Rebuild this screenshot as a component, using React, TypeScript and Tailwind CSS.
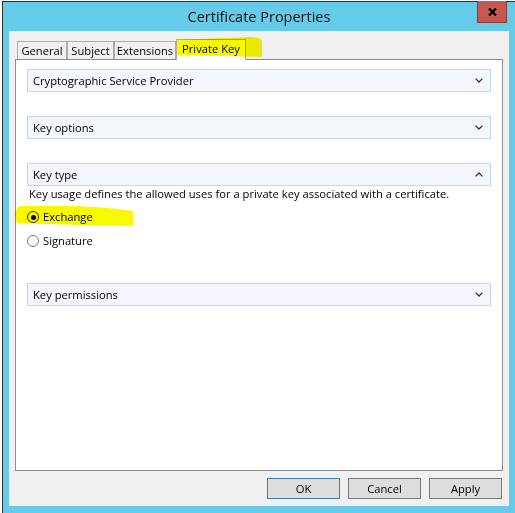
import { ReactNode } from "react";

function Chevron({ up = false }: { up?: boolean }) {
  return (
    <svg width="8" height="5" viewBox="0 0 8 5" className="shrink-0">
      <path
        d={up ? "M0.6 4.4 L4 1 L7.4 4.4" : "M0.6 0.6 L4 4 L7.4 0.6"}
        fill="none"
        stroke="#333"
        strokeWidth="1.3"
      />
    </svg>
  );
}

function Section({ title, open = false }: { title: string; open?: boolean }) {
  return (
    <div className="flex h-[23px] items-center justify-between border border-[#c3d8f3] bg-[#f3f7fd] pl-[5px] pr-[7px]">
      <span>{title}</span>
      <Chevron up={open} />
    </div>
  );
}

function Radio({ checked, children }: { checked?: boolean; children: ReactNode }) {
  return (
    <label className="flex h-[16px] items-center gap-[4px]">
      <span
        className={
          "flex size-[12px] items-center justify-center rounded-full border bg-white " +
          (checked ? "border-[#333]" : "border-[#777]")
        }
      >
        {checked && <span className="size-[5px] rounded-full bg-black" />}
      </span>
      <span>{children}</span>
    </label>
  );
}

function Tab({ label, width, active = false }: { label: string; width: string; active?: boolean }) {
  return (
    <div
      className={
        "flex items-center justify-center border border-b-0 border-[#acacac] " +
        width +
        (active ? " relative z-10 -mb-px h-[21px] bg-white pb-[2px]" : " h-[18px] bg-[#f0f0f0]")
      }
    >
      {label}
    </div>
  );
}

function Button({ label, primary = false }: { label: string; primary?: boolean }) {
  return (
    <button
      className={
        "flex h-[21px] w-[73px] items-center justify-center border bg-[#dddddd] " +
        (primary ? "border-[#3c7fb1]" : "border-[#7a7a7a]")
      }
    >
      {label}
    </button>
  );
}

export default function App() {
  return (
    <div className="relative h-[513px] w-[515px] overflow-hidden bg-white pl-[2px] pt-px font-['Open_Sans',sans-serif] text-[11.2px] leading-[16px] text-black">
      <div className="flex h-full flex-col border-l border-t border-[#2d2d2d] bg-[#65cbe9]">
        {/* title bar */}
        <div className="grid h-[29px] shrink-0 grid-cols-[1fr_auto_1fr] items-center">
          <div />
          <div className="text-[14.5px] leading-[20px] text-[#111]">Certificate Properties</div>
          <div className="-mt-px flex justify-end self-start pr-[8px]">
            <div className="flex h-[22px] w-[30px] items-center justify-center border border-t-0 border-[#8a3b34] bg-[#c75850]">
              <svg width="9" height="8" viewBox="0 0 9 8">
                <path d="M1 0.5 L8 7.5 M8 0.5 L1 7.5" stroke="#000" strokeWidth="2.2" />
              </svg>
            </div>
          </div>
        </div>

        {/* client area */}
        <div className="ml-[6px] flex h-[475px] w-[500px] flex-col bg-[#f0f0f0] px-[6px]">
          <div className="flex h-[28px] items-end pl-[2px]">
            <Tab label="General" width="w-[50px]" />
            <Tab label="Subject" width="w-[47px]" />
            <Tab label="Extensions" width="w-[62px]" />
            <Tab label="Private Key" width="w-[70px]" active />
          </div>

          <div className="flex h-[412px] flex-col border border-[#898c95] bg-white px-[11px] pt-[9px]">
            <Section title="Cryptographic Service Provider" />
            <div className="mt-[24px]">
              <Section title="Key options" />
            </div>
            <div className="mt-[24px]">
              <Section title="Key type" open />
            </div>
            <p className="pl-[2px]">
              Key usage defines the allowed uses for a private key associated with a certificate.
            </p>
            <div className="mt-[7px]">
              <Radio checked>Exchange</Radio>
            </div>
            <div className="mt-[8px]">
              <Radio>Signature</Radio>
            </div>
            <div className="mt-[34px]">
              <Section title="Key permissions" />
            </div>
          </div>

          <div className="mt-[7px] flex justify-end gap-[8px] pr-px">
            <Button label="OK" primary />
            <Button label="Cancel" />
            <Button label="Apply" />
          </div>
        </div>
      </div>

      {/* highlighter marks */}
      <svg
        width="515"
        height="513"
        className="pointer-events-none absolute left-0 top-0 z-20 mix-blend-multiply"
      >
        <path d="M177 40 L250 37 Q262 37 262 42 L262 57 L177 55 Z" fill="#f8f800" />
        <path d="M17 208 Q14 215 17 223 L80 225 L133 226 L133 211 Q100 206 60 206 L20 206 Z" fill="#f8f800" />
      </svg>
    </div>
  );
}
